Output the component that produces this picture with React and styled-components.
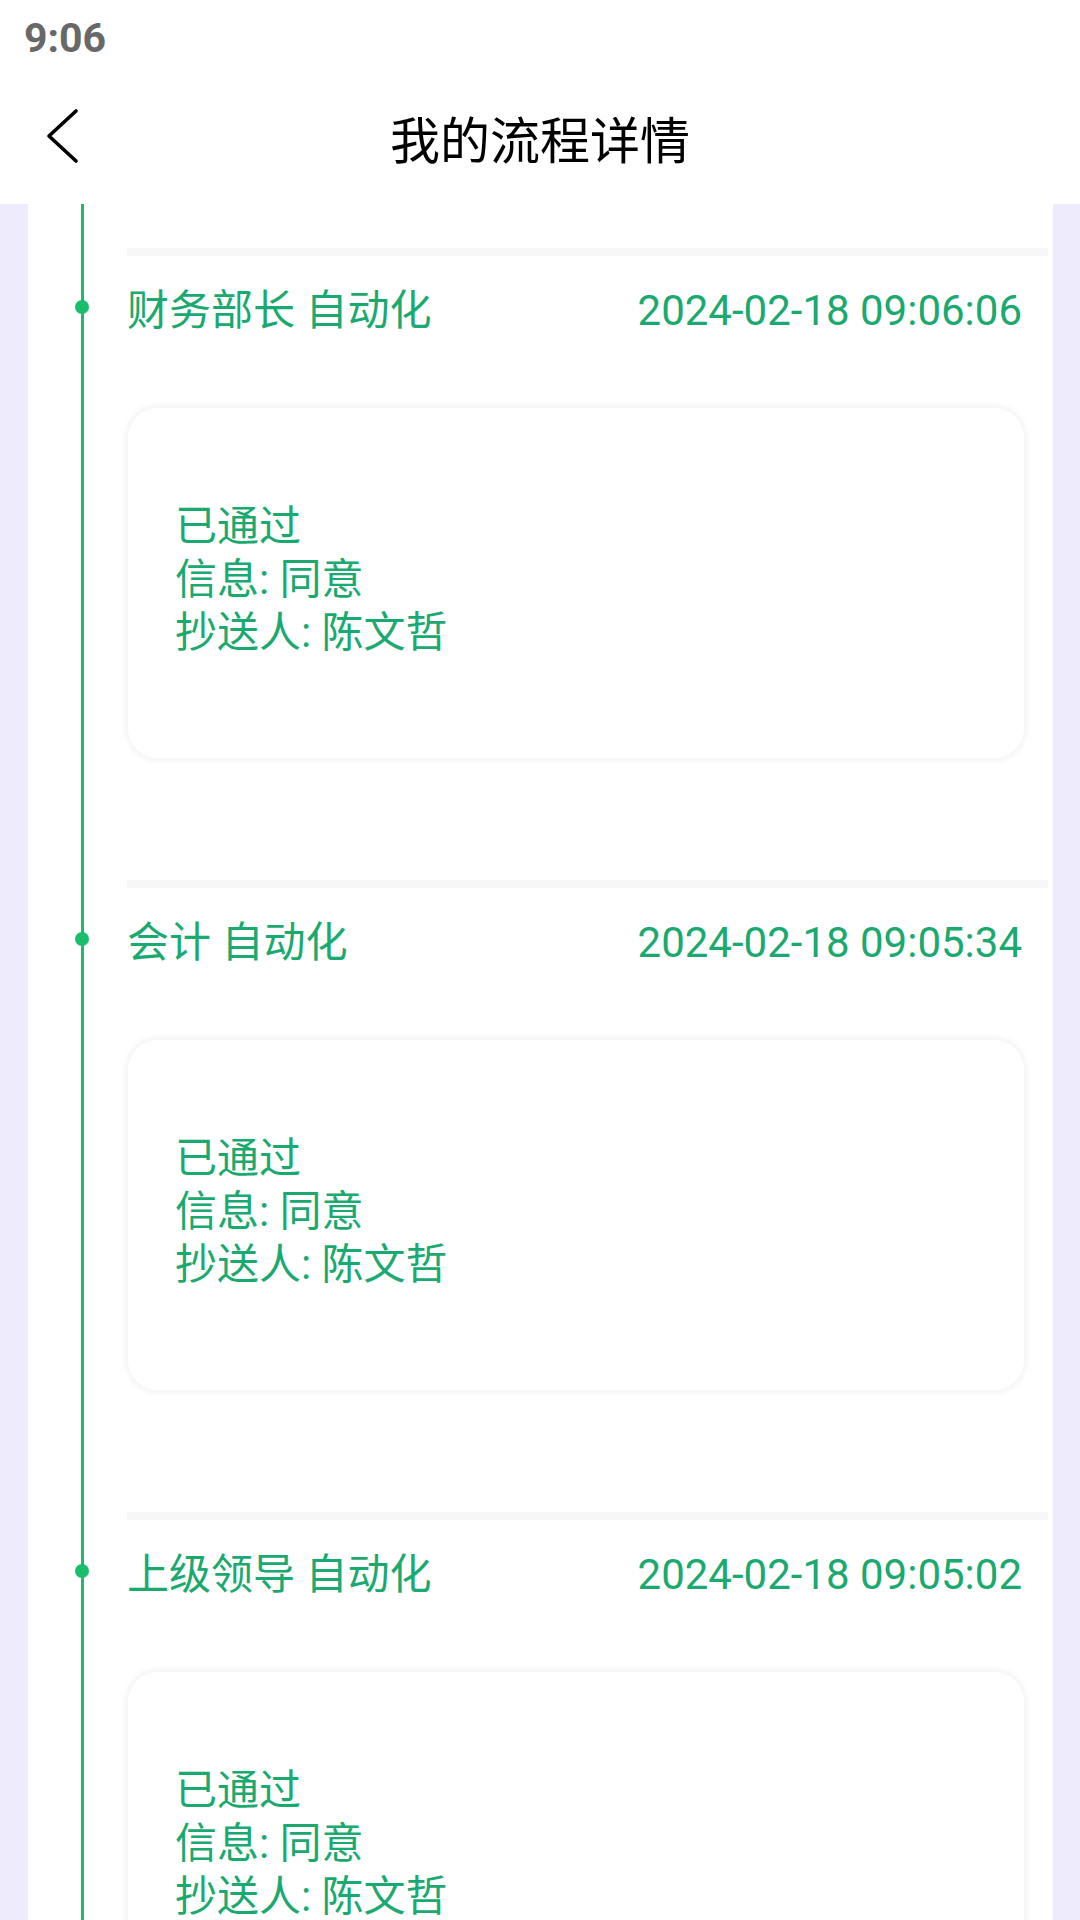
import React from 'react'
import styled, { createGlobalStyle } from 'styled-components'

const GlobalStyle = createGlobalStyle`
  body {
    margin: 0;
    background: #edebfc;
    font-family: Roboto, "Noto Sans CJK SC", "Noto Sans", sans-serif;
  }
`

const records = [
  { role: '财务部长 自动化', time: '2024-02-18 09:06:06', status: '已通过', info: '同意', cc: '陈文哲' },
  { role: '会计 自动化', time: '2024-02-18 09:05:34', status: '已通过', info: '同意', cc: '陈文哲' },
  { role: '上级领导 自动化', time: '2024-02-18 09:05:02', status: '已通过', info: '同意', cc: '陈文哲' },
]

function App() {
  return (
    <Page>
      <GlobalStyle />
      <Header>
        <StatusBar>9:06</StatusBar>
        <NavBar>
          <BackButton>
            <svg width="34" height="56" viewBox="0 0 34 56">
              <polyline points="30,3 3,28 30,53" fill="none" stroke="#000" strokeWidth="3.6" strokeLinecap="round" strokeLinejoin="round" />
            </svg>
          </BackButton>
          <Title>我的流程详情</Title>
        </NavBar>
      </Header>

      <Card>
        <Timeline>
          {records.map((r) => (
            <Item key={r.time}>
              <Divider />
              <ItemHead>
                <Dot />
                <Role>{r.role}</Role>
                <span>{r.time}</span>
              </ItemHead>
              <Detail>
                <Line>{r.status}</Line>
                <Line>信息: {r.info}</Line>
                <Line>抄送人: {r.cc}</Line>
              </Detail>
            </Item>
          ))}
        </Timeline>
      </Card>
    </Page>
  )
}

export default App

const Page = styled.div`
  min-height: 1920px;
  display: flex;
  flex-direction: column;
`

const Header = styled.div`
  background: #fff;
  height: 204px;
  display: flex;
  flex-direction: column;
`

const StatusBar = styled.div`
  height: 76px;
  display: flex;
  align-items: center;
  padding-left: 24px;
  font-size: 41px;
  font-weight: 700;
  color: #686868;
`

const NavBar = styled.div`
  flex: 1;
  position: relative;
  display: flex;
  align-items: center;
  justify-content: center;
  padding-bottom: 6px;
`

const BackButton = styled.div`
  position: absolute;
  left: 46px;
  top: 32px;
  display: flex;
`

const Title = styled.div`
  font-size: 50px;
  color: #000;
  font-family: "Noto Sans CJK SC", sans-serif;
`

const Card = styled.div`
  flex: 1;
  margin: 0 27px 0 28px;
  background: #fff;
  padding-right: 5px;
`

const Timeline = styled.div`
  margin-left: 53px;
  border-left: 3px solid #19be6b;
  padding: 44px 0 0 43px;
  min-height: 1672px;
`

const Item = styled.div`
  padding-bottom: 122px;
`

const Divider = styled.div`
  height: 8px;
  background: #f7f7f7;
`

const ItemHead = styled.div`
  position: relative;
  height: 108px;
  display: flex;
  align-items: center;
  justify-content: space-between;
  padding-right: 26px;
  font-size: 42px;
  color: #1aa96f;
`

const Role = styled.span`
  position: relative;
  top: -4px;
`

const Dot = styled.div`
  position: absolute;
  left: -52px;
  top: 44px;
  width: 14px;
  height: 14px;
  border-radius: 50%;
  background: #19be6b;
`

const Detail = styled.div`
  margin: 44px 24px 0 1px;
  height: 350px;
  box-sizing: border-box;
  padding: 92px 47px 0;
  border-radius: 30px;
  background: #fff;
  box-shadow: 0 0 4px 4px #f7f7f7;
`

const Line = styled.div`
  font-size: 42px;
  line-height: 53px;
  color: #1aa96f;
`
